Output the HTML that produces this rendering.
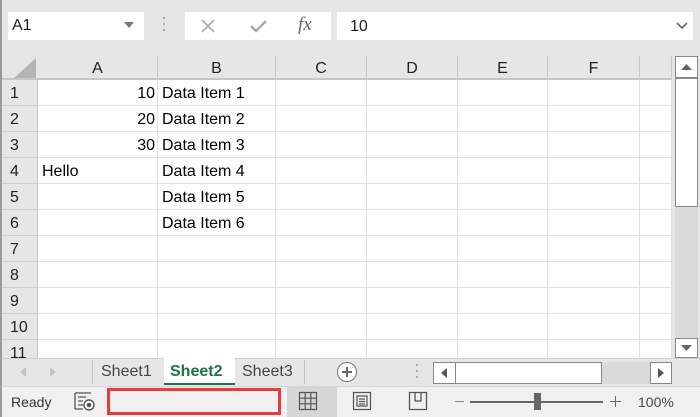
<!DOCTYPE html>
<html><head><style>
*{box-sizing:border-box;margin:0;padding:0}
body{width:700px;height:417px;overflow:hidden;background:#e6e6e6;font-family:"Liberation Sans",sans-serif;position:relative}
.a{position:absolute}
.cell{position:absolute;font-size:16px;color:#000;line-height:28px}
</style></head><body>
<div class="a" style="left:0;top:0;width:700px;height:56px;background:#e6e6e6;border-left:2px solid #9a9a9a"></div>
<div class="a" style="left:8px;top:12px;width:136px;height:28px;background:#fff"></div>
<div class="a" style="left:12px;top:12px;font-size:16px;line-height:28px;color:#222">A1</div>
<svg class="a" style="left:124px;top:22px" width="10" height="6"><path d="M0 0H10L5 6Z" fill="#777"/></svg>
<div class="a" style="left:163px;top:17px;width:2px;height:2px;background:#aaa;box-shadow:0 6px #aaa,0 12px #aaa"></div>
<div class="a" style="left:185px;top:12px;width:146px;height:28px;background:#fff"></div>
<svg class="a" style="left:200px;top:18px" width="16" height="16"><path d="M2 2L14 14M14 2L2 14" stroke="#aaa" stroke-width="1.6"/></svg>
<svg class="a" style="left:249px;top:18px" width="20" height="16"><path d="M2 8L7 13L17 3" stroke="#aaa" stroke-width="2.4" fill="none"/></svg>
<div class="a" style="left:298px;top:12px;font-family:'Liberation Serif',serif;font-style:italic;font-size:19px;line-height:26px;color:#666">fx</div>
<div class="a" style="left:337px;top:12px;width:356px;height:28px;background:#fff"></div>
<div class="a" style="left:350px;top:13px;font-size:16px;line-height:28px;color:#222">10</div>
<svg class="a" style="left:676px;top:22px" width="12" height="8"><path d="M1 1L6 6L11 1" stroke="#666" stroke-width="1.6" fill="none"/></svg>
<div class="a" style="left:0;top:56px;width:672px;height:302px;background:#fff;border-left:2px solid #9a9a9a"></div>
<div class="a" style="left:2px;top:56px;width:670px;height:24px;background:#e6e6e6;border-bottom:2px solid #c6c6c6"></div>
<div class="a" style="left:2px;top:80px;width:36px;height:278px;background:#e6e6e6;border-right:1px solid #c6c6c6"></div>
<svg class="a" style="left:14px;top:58px" width="22" height="20"><path d="M22 0V20H0Z" fill="#b4b4b4"/></svg>
<div id="g"></div>
<div class="a" style="left:672px;top:56px;width:28px;height:302px;background:#e6e6e6"></div>
<div class="a" style="left:675px;top:78px;width:23px;height:262px;background:#dadada"></div>
<div class="a" style="left:675px;top:56px;width:23px;height:22px;background:#fff;border:1px solid #888"></div>
<svg class="a" style="left:681px;top:64px" width="11" height="6"><path d="M0 6H11L5.5 0Z" fill="#666"/></svg>
<div class="a" style="left:675px;top:78px;width:23px;height:129px;background:#fff;border:1px solid #888"></div>
<div class="a" style="left:675px;top:338px;width:23px;height:20px;background:#fff;border:1px solid #888"></div>
<svg class="a" style="left:681px;top:345px" width="11" height="6"><path d="M0 0H11L5.5 6Z" fill="#666"/></svg>
<div class="a" style="left:0;top:358px;width:700px;height:28px;background:#e6e6e6;border-left:2px solid #9a9a9a;border-top:1px solid #d0d0d0"></div>
<svg class="a" style="left:20px;top:367px" width="40" height="10"><path d="M6 0V10L0 5Z M30 0V10L36 5Z" fill="#c4c4c4"/></svg>
<div class="a" style="left:92px;top:360px;width:1px;height:24px;background:#c0c0c0"></div>
<div class="a" style="left:101px;top:359px;font-size:16px;line-height:26px;color:#444">Sheet1</div>
<div class="a" style="left:164px;top:358px;width:71px;height:27px;background:#fff;border-bottom:2px solid #217346"></div>
<div class="a" style="left:170px;top:359px;font-size:16px;line-height:26px;color:#217346;font-weight:bold">Sheet2</div>
<div class="a" style="left:242px;top:359px;font-size:16px;line-height:26px;color:#444">Sheet3</div>
<div class="a" style="left:304px;top:360px;width:1px;height:24px;background:#c0c0c0"></div>
<div class="a" style="left:337px;top:362px;width:20px;height:20px;border:1.5px solid #777;border-radius:50%;background:#fff"></div>
<div class="a" style="left:342px;top:371px;width:10px;height:2px;background:#666"></div>
<div class="a" style="left:346px;top:367px;width:2px;height:10px;background:#666"></div>
<div class="a" style="left:416px;top:364px;width:2px;height:2px;background:#aaa;box-shadow:0 6px #aaa,0 12px #aaa"></div>
<div class="a" style="left:433px;top:362px;width:239px;height:22px;background:#dadada"></div>
<div class="a" style="left:433px;top:362px;width:23px;height:22px;background:#fff;border:1px solid #888"></div>
<svg class="a" style="left:441px;top:368px" width="6" height="10"><path d="M6 0V10L0 5Z" fill="#555"/></svg>
<div class="a" style="left:455px;top:362px;width:147px;height:22px;background:#fff;border:1px solid #888"></div>
<div class="a" style="left:650px;top:362px;width:22px;height:22px;background:#fff;border:1px solid #888"></div>
<svg class="a" style="left:658px;top:368px" width="6" height="10"><path d="M0 0V10L6 5Z" fill="#555"/></svg>
<div class="a" style="left:0;top:386px;width:700px;height:31px;background:#f0f0f0;border-left:2px solid #9a9a9a;border-top:1px solid #d6d6d6"></div>
<div class="a" style="left:11px;top:387px;font-size:14px;line-height:30px;color:#333">Ready</div>
<svg class="a" style="left:74px;top:392px" width="22" height="20"><path d="M1 1H17M1 1V17M4 5H12M4 9H9M4 13H9M1 17H9" stroke="#555" stroke-width="1.3" fill="none"/><circle cx="15" cy="13" r="5" fill="#fff" stroke="#555" stroke-width="1.4"/><circle cx="15" cy="13" r="2.3" fill="#555"/></svg>
<div class="a" style="left:107px;top:388px;width:174px;height:27px;border:3px solid #e83b3b;background:#f0f0f0"></div>
<div class="a" style="left:287px;top:387px;width:50px;height:30px;background:#d6d6d6"></div>
<svg class="a" style="left:298px;top:391px" width="20" height="20"><path d="M1.5 1.5H18.5V18.5H1.5Z M1.5 7.2H18.5M1.5 12.8H18.5M7.2 1.5V18.5M12.8 1.5V18.5" stroke="#555" stroke-width="1.2" fill="none"/></svg>
<svg class="a" style="left:352px;top:391px" width="20" height="20"><path d="M1.5 1.5H18.5V18.5H1.5Z M5 5H15V15H5Z M7 8H13M7 10.5H13M7 13H13" stroke="#555" stroke-width="1.2" fill="none"/></svg>
<svg class="a" style="left:408px;top:391px" width="20" height="20"><path d="M1.5 1.5H18.5V18.5H1.5Z M7 1.5V10H13V1.5" stroke="#555" stroke-width="1.3" fill="none"/></svg>
<div class="a" style="left:455px;top:401px;width:9px;height:1px;background:#888"></div>
<div class="a" style="left:470px;top:401px;width:133px;height:2px;background:#666"></div>
<div class="a" style="left:534px;top:393px;width:7px;height:17px;background:#666"></div>
<div class="a" style="left:610px;top:401px;width:11px;height:1px;background:#666"></div>
<div class="a" style="left:615px;top:396px;width:1px;height:11px;background:#666"></div>
<div class="a" style="left:638px;top:387px;font-size:14px;line-height:30px;color:#444">100%</div>
<script>
var g='';var cols=[38,158,276,367,458,548,640,672];var L=['A','B','C','D','E','F',''];
for(var i=0;i<7;i++){var w=cols[i+1]-cols[i];g+='<div class="a" style="left:'+cols[i]+'px;top:56px;width:'+w+'px;height:24px;text-align:center;font-size:16px;line-height:26px;color:#222;border-right:1px solid #c6c6c6">'+L[i]+'</div>';
g+='<div class="a" style="left:'+(cols[i+1]-1)+'px;top:80px;width:1px;height:278px;background:#e1e1e1"></div>';}
for(var r=1;r<=11;r++){var y=80+(r-1)*26;g+='<div class="a" style="left:38px;top:'+(y+25)+'px;width:634px;height:1px;background:#e1e1e1"></div>';
g+='<div class="a" style="left:2px;top:'+(y+25)+'px;width:36px;height:1px;background:#d0d0d0"></div>';
g+='<div class="cell" style="left:10px;top:'+y+'px;color:#222">'+r+'</div>';}
var A=['10','20','30'];for(var k=0;k<3;k++)g+='<div class="cell" style="left:38px;width:117px;text-align:right;top:'+(80+k*26)+'px">'+A[k]+'</div>';
g+='<div class="cell" style="left:42px;top:158px">Hello</div>';
for(var k=0;k<6;k++)g+='<div class="cell" style="left:162px;top:'+(80+k*26)+'px">Data Item '+(k+1)+'</div>';
document.getElementById('g').innerHTML=g;
</script>
</body></html>
